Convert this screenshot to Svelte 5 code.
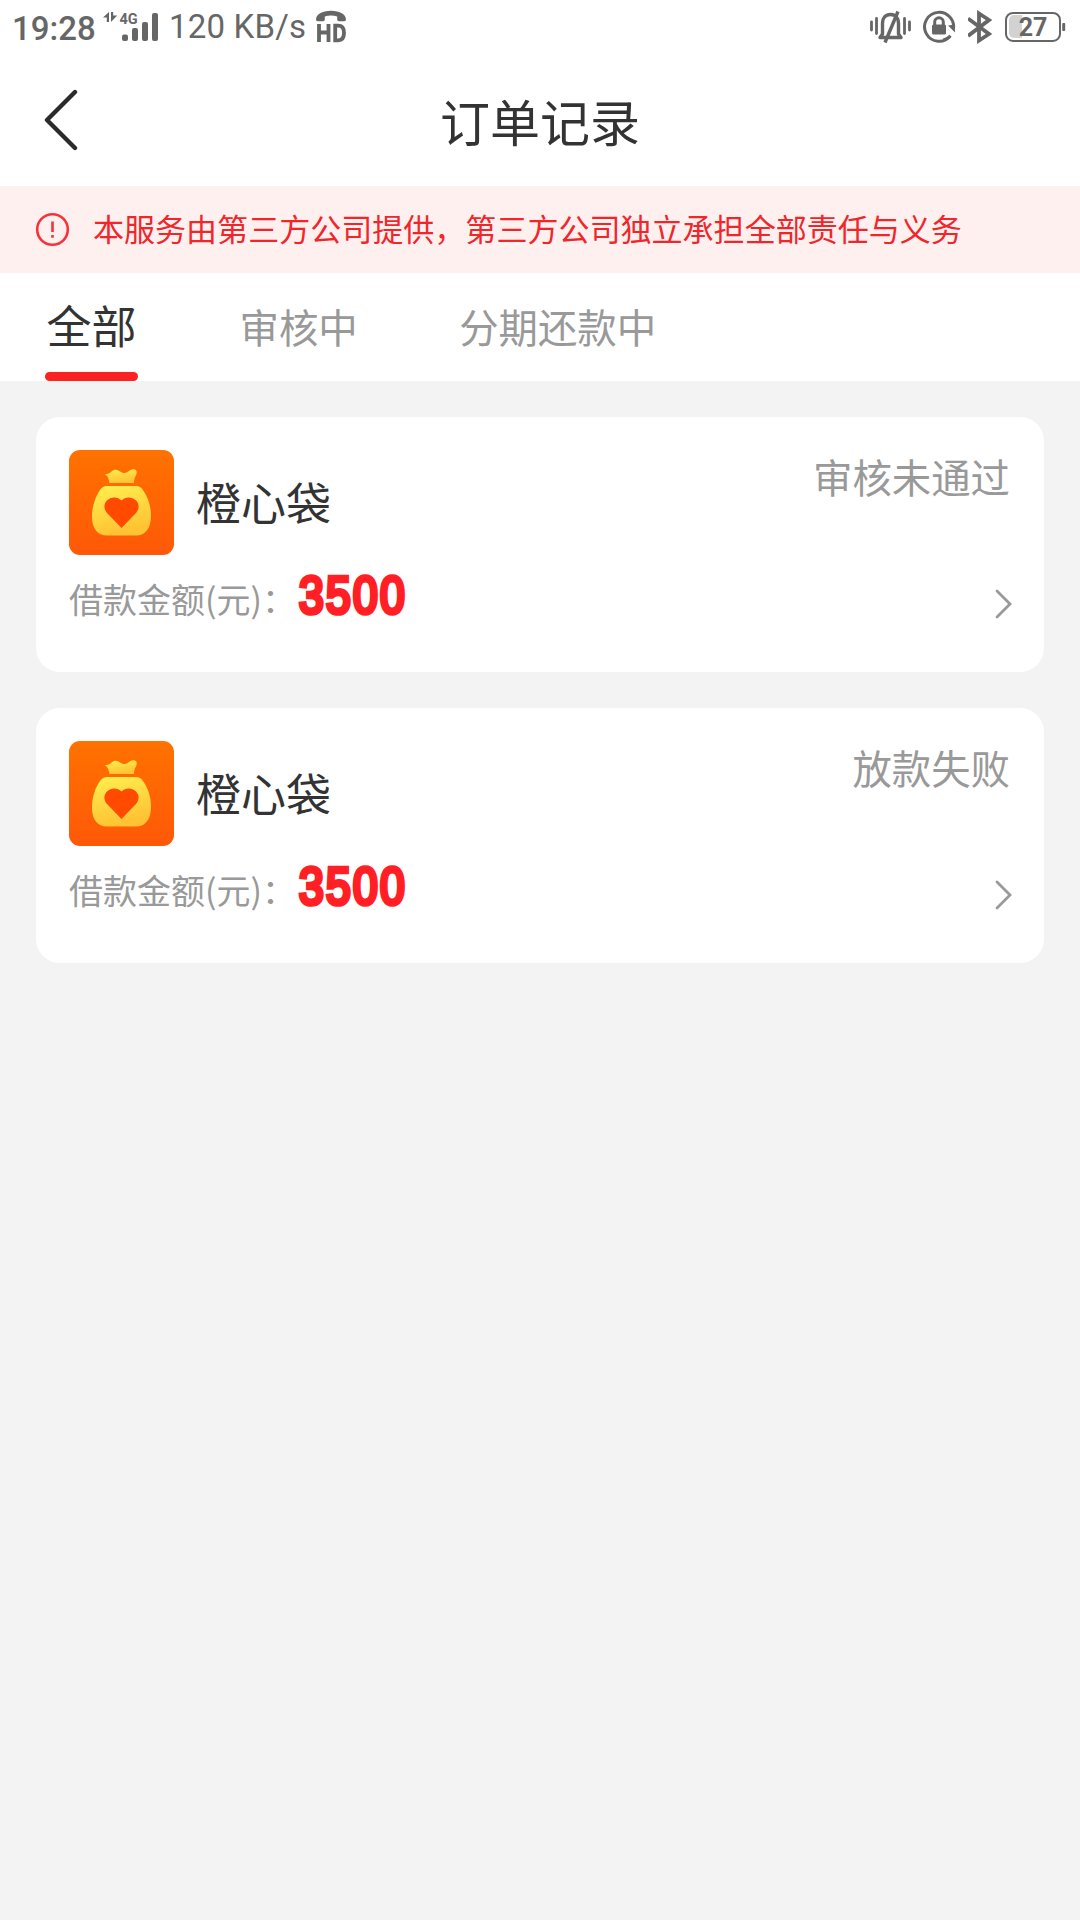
<script lang="ts">
    let tabs = ["全部", "审核中", "分期还款中"];
    let activeTab = tabs[0];

    let orders = [
        { id: 1, name: "橙心袋", amount: 3500, status: "审核未通过" },
        { id: 2, name: "橙心袋", amount: 3500, status: "放款失败" },
    ];
</script>

<div class="page">
    <div class="status-bar">
        <span class="clock">19:28</span>
        <svg class="signal" width="56" height="56" viewBox="103 0 56 56">
            <path d="M103 17.500l6-5.500v10h-2.200v-4.500zM111 12h2.200v3.600h4L111 22z" />
            <text x="119.5" y="23.5">4G</text>
            <rect x="122" y="34.5" width="6" height="6.5" rx="2" />
            <rect x="132" y="28" width="6" height="13" rx="2" />
            <rect x="142" y="22" width="6" height="19" rx="2" />
            <rect x="152" y="13" width="6" height="28" rx="2" />
        </svg>
        <span class="speed">120 KB/s</span>
        <svg class="hd" width="32" height="56" viewBox="315 0 32 56">
            <path
                d="M316 19.500c0-5 6-8.700 15-8.700s15 3.700 15 8.700c0 1-.8 1.700-1.800 1.700h-5.200c-1 0-1.800-.8-1.800-1.700v-3c-4-1.200-8.400-1.200-12.400 0v3c0 1-.8 1.700-1.800 1.700h-5.200c-1 0-1.800-.7-1.800-1.700z"
            />
            <path
                class="line"
                d="M319 24v18M328.500 24v18M319 32.500h9.500M335.200 25.700v14.600h3c4 0 5.800-2.500 5.800-7.300s-1.800-7.300-5.800-7.300z"
            />
        </svg>

        <div class="right-icons">
            <svg width="42" height="56" viewBox="870 0 42 56">
                <path
                    class="thin"
                    d="M871.500 22v8M876.500 18.500v15M904.500 18.500v15M909.500 22v8"
                />
                <path
                    class="bell"
                    d="M882.500 34v-11c0-5 3-8.500 8-8.500s8 3.500 8 8.500v11l2.500 3.500h-21zM885 42.500l13-31"
                />
            </svg>
            <svg width="34" height="56" viewBox="923 0 34 56">
                <path
                    class="ring"
                    d="M950.500 35.800a14.500 14.500 0 1 1 2.300-4.200M943 40.200a14.500 14.500 0 0 0 7.500-4.400"
                    stroke-dasharray="83 5 20"
                />
                <path d="M948 25.500l6.800-1 .2 8z" />
                <rect x="932" y="24.500" width="14" height="10" rx="1.500" />
                <path class="ring" d="M934.700 25v-3a4.300 4.300 0 0 1 8.600 0v3" />
            </svg>
            <svg width="26" height="56" viewBox="968 0 26 56">
                <path
                    class="line"
                    d="M968 18.500L989 34l-10 6.500V13.500L989 20 968 36"
                />
            </svg>
            <svg width="61" height="56" viewBox="1005 0 61 56">
                <path
                    class="charge"
                    d="M1022 15h-8a5 5 0 0 0-5 5v13a5 5 0 0 0 5 5h8z"
                />
                <rect
                    class="shell"
                    x="1006"
                    y="12.900"
                    width="54"
                    height="28"
                    rx="7"
                />
                <rect x="1062.200" y="23" width="3" height="8" rx="1" />
                <text class="percent" x="1033" y="36">27</text>
            </svg>
        </div>
    </div>

    <header>
        <svg class="back" width="36" height="64" viewBox="0 0 36 64">
            <path d="M32 3L4 31l28 28" />
        </svg>
        <h1>订单记录</h1>
    </header>

    <div class="notice">
        <svg width="36" height="36" viewBox="0 0 36 36">
            <circle cx="17.500" cy="17.500" r="15.300" />
            <path d="M17.500 9.500V20M17.500 23v2.700" />
        </svg>
        <p>本服务由第三方公司提供，第三方公司独立承担全部责任与义务</p>
    </div>

    <nav>
        {#each tabs as tab}
            <button
                class:active={tab === activeTab}
                on:click={() => (activeTab = tab)}>{tab}</button
            >
        {/each}
    </nav>

    <div class="orders">
        {#each orders as order (order.id)}
            <div class="card">
                <div class="card-top">
                    <svg class="logo" viewBox="0 0 105 105">
                        <defs>
                            <linearGradient id="bg{order.id}" x2="0" y2="1">
                                <stop offset="0" stop-color="#ff7200" />
                                <stop offset="1" stop-color="#ff5808" />
                            </linearGradient>
                            <linearGradient id="bag{order.id}" x2=".3" y2="1">
                                <stop offset="0" stop-color="#fff04f" />
                                <stop offset="1" stop-color="#ffc334" />
                            </linearGradient>
                        </defs>
                        <rect
                            width="105"
                            height="105"
                            rx="11"
                            fill="url(#bg{order.id})"
                        />
                        <path
                            fill="url(#bag{order.id})"
                            d="M40.500 33l-1-4c-.5-2-1.800-3.500-3.500-5 3 0 4.500-.5 6.500-2.500 2-2 4.500-2.500 7-1 3 1.800 6 4 9 1.500 2.500-2 5-3.500 7.500-2.500 2.500 1.200 1.800 4.500.7 6.500-1.200 2-1.700 4.500-1.700 7z"
                        />
                        <path
                            fill="url(#bag{order.id})"
                            d="M38 36h29c3 0 5 1.500 7 4 4.500 6.500 8 15 8 26 0 12-5.500 19.500-15 19.500H38c-9.500 0-15-7-15-18.500 0-11.500 3.500-20.500 8-27 2-2.500 4-4 7-4z"
                        />
                        <path
                            fill="#ff4a00"
                            d="M52.500 78L38.500 63.500c-4-4-4-9.500-.5-13 4-4 10.500-4 14.500 0 4-4 10.500-4 14.500 0 3.500 3.500 3.500 9-.5 13z"
                        />
                    </svg>
                    <span class="name">{order.name}</span>
                    <span class="status">{order.status}</span>
                </div>
                <div class="card-bottom">
                    <span class="label">借款金额(元)：</span>
                    <span class="amount">{order.amount}</span>
                    <svg class="arrow" width="18" height="30" viewBox="0 0 18 30">
                        <path d="M2 2l13 13L2 28" />
                    </svg>
                </div>
            </div>
        {/each}
    </div>
</div>

<style>
    :global(body) {
        background: #f3f3f3;
    }

    .page {
        width: 1080px;
        min-height: 1920px;
        background: #f3f3f3;
        font-family: "Noto Sans CJK SC", sans-serif;
        color: #333;
    }

    .status-bar {
        display: flex;
        height: 56px;
        padding: 0 14px 0 12px;
        box-sizing: border-box;
        background: #fff;
        color: #666;
        fill: #666;
        font-family: Roboto, sans-serif;
        font-size: 33px;
        line-height: 56px;
        white-space: nowrap;
    }

    .clock {
        width: 91px;
        font-weight: 500;
        line-height: 57px;
    }

    .signal {
        margin-right: 10px;
    }

    .signal text {
        font-size: 14.5px;
        font-weight: 700;
    }

    .speed {
        width: 146px;
        letter-spacing: 0.2px;
        line-height: 53px;
    }

    .right-icons {
        display: flex;
        margin-left: auto;
        gap: 11px;
    }

    .line,
    .thin,
    .bell,
    .ring,
    .shell {
        fill: none;
        stroke: #666;
    }

    .line {
        stroke-width: 3.8;
    }

    .thin {
        stroke-width: 2.8;
        stroke-linecap: round;
    }

    .bell {
        stroke-width: 3.4;
        stroke-linejoin: round;
    }

    .ring {
        stroke-width: 3;
    }

    .shell {
        stroke-width: 2;
    }

    .charge {
        fill: #d2d2d2;
    }

    .percent {
        font-size: 25px;
        font-weight: 700;
        text-anchor: middle;
    }

    header {
        display: flex;
        align-items: center;
        height: 130px;
        padding: 0 43px;
        box-sizing: border-box;
        background: #fff;
    }

    .back {
        fill: none;
        stroke: #2b2b2b;
        stroke-width: 4.4;
        stroke-linecap: round;
        stroke-linejoin: round;
    }

    h1 {
        flex: 1;
        margin: 0 36px 2px 0;
        font-size: 50px;
        font-weight: 400;
        line-height: 74px;
        text-align: center;
    }

    .notice {
        display: flex;
        align-items: center;
        gap: 22px;
        height: 87px;
        padding-left: 35px;
        background: #fff0f0;
        color: #f0262a;
        font-size: 31.04px;
    }

    .notice svg {
        fill: none;
        stroke: #f9303a;
        stroke-width: 2.6;
    }

    .notice p {
        margin: 0 0 4px;
    }

    nav {
        display: flex;
        gap: 101.5px;
        height: 108px;
        padding-left: 45px;
        background: #fff;
    }

    button {
        padding: 6px 0 0;
        border: none;
        border-bottom: 9px solid transparent;
        background: none;
        color: #999;
        font-family: inherit;
        font-size: 39.4px;
        line-height: 93px;
    }

    button.active {
        position: relative;
        width: 93px;
        padding-top: 4px;
        color: #333;
        font-size: 45px;
        line-height: 95px;
    }

    button.active::after {
        content: "";
        position: absolute;
        left: 0;
        bottom: -9px;
        width: 93px;
        height: 9px;
        border-radius: 5px;
        background: #fb2222;
    }

    .orders {
        display: flex;
        flex-direction: column;
        gap: 36px;
        padding: 36px;
    }

    .card {
        height: 255px;
        padding: 33px 34px 0 33px;
        box-sizing: border-box;
        border-radius: 24px;
        background: #fff;
    }

    .card-top {
        display: flex;
        align-items: center;
    }

    .logo {
        width: 105px;
        height: 105px;
    }

    .name {
        margin: 0 0 2px 22px;
        font-size: 45px;
        line-height: 66px;
    }

    .status {
        align-self: flex-start;
        margin-left: auto;
        color: #999;
        font-size: 39.4px;
        line-height: 52px;
    }

    .card-bottom {
        display: flex;
        align-items: center;
        height: 90px;
    }

    .label {
        width: 230px;
        margin-bottom: 4px;
        color: #999;
        font-size: 34px;
        white-space: nowrap;
    }

    .amount {
        margin-bottom: 9px;
        color: #ff1f24;
        font-family: "Liberation Sans", sans-serif;
        font-size: 51px;
        letter-spacing: 2.7px;
        line-height: 60px;
        transform: scaleX(0.87);
        transform-origin: left;
        -webkit-text-stroke: 4.6px #ff1f24;
    }

    .arrow {
        margin: 8px -3px 0 auto;
        fill: none;
        stroke: #999;
        stroke-width: 2.8;
        stroke-linecap: round;
    }
</style>
